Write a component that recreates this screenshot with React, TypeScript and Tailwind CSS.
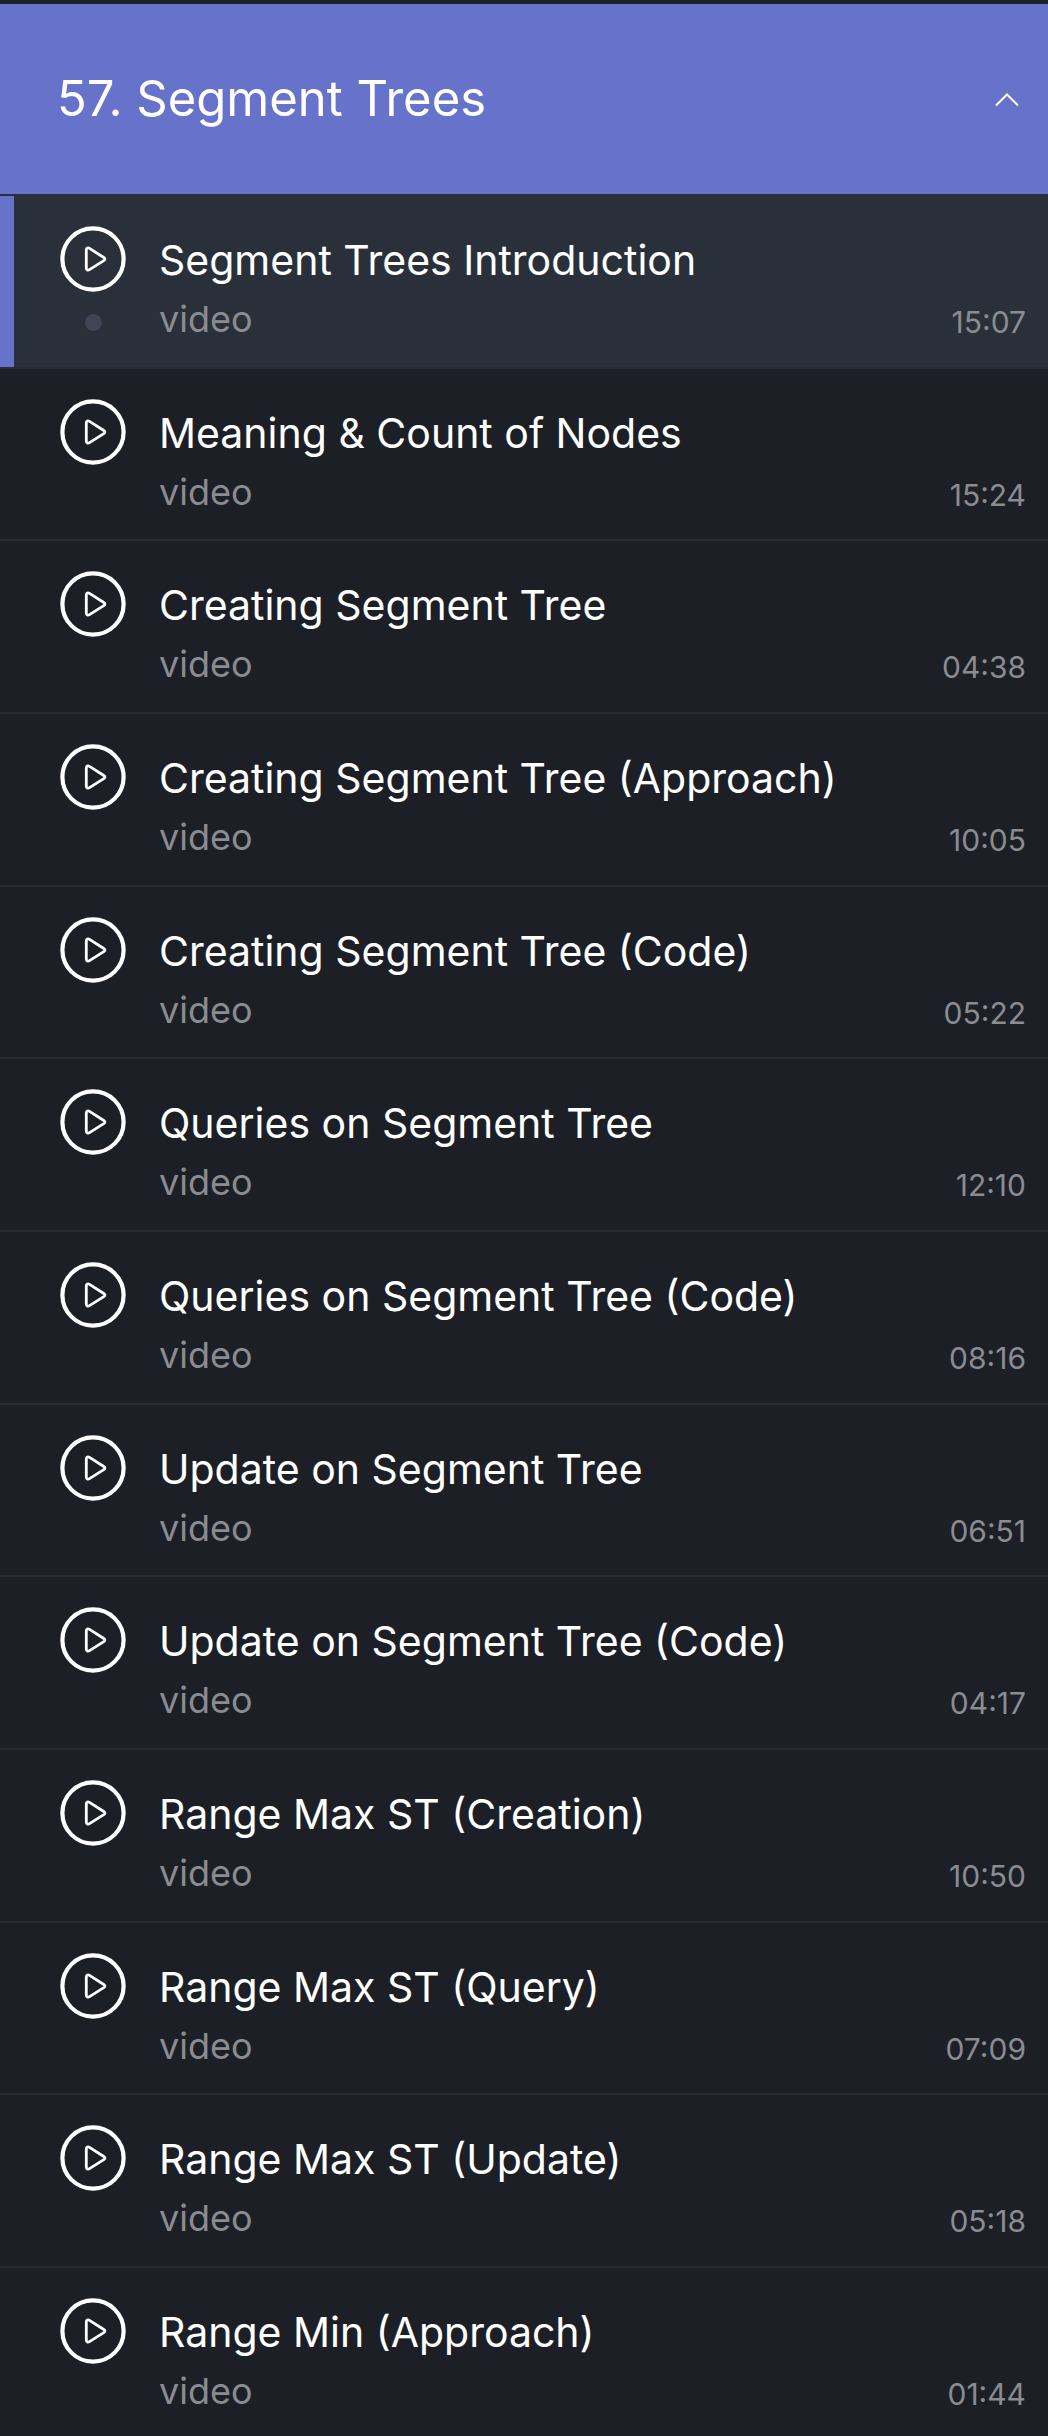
import { useState } from "react";

type Lesson = { title: string; kind: string; duration: string };

const lessons: Lesson[] = [
  { title: "Segment Trees Introduction", kind: "video", duration: "15:07" },
  { title: "Meaning & Count of Nodes", kind: "video", duration: "15:24" },
  { title: "Creating Segment Tree", kind: "video", duration: "04:38" },
  { title: "Creating Segment Tree (Approach)", kind: "video", duration: "10:05" },
  { title: "Creating Segment Tree (Code)", kind: "video", duration: "05:22" },
  { title: "Queries on Segment Tree", kind: "video", duration: "12:10" },
  { title: "Queries on Segment Tree (Code)", kind: "video", duration: "08:16" },
  { title: "Update on Segment Tree", kind: "video", duration: "06:51" },
  { title: "Update on Segment Tree (Code)", kind: "video", duration: "04:17" },
  { title: "Range Max ST (Creation)", kind: "video", duration: "10:50" },
  { title: "Range Max ST (Query)", kind: "video", duration: "07:09" },
  { title: "Range Max ST (Update)", kind: "video", duration: "05:18" },
  { title: "Range Min (Approach)", kind: "video", duration: "01:44" },
];

function PlayIcon() {
  return (
    <svg viewBox="0 0 66 66" className="block size-[66px]" fill="none" stroke="currentColor" aria-hidden="true">
      <circle cx="33" cy="33" r="30.6" strokeWidth="4.2" />
      <path
        d="M26.3 24V42c0 2 1.6 2.6 3.2 1.6l14.3-9c1.5-1 1.5-2.2 0-3.1l-14.3-9.1c-1.6-1-3.2-.4-3.2 1.6Z"
        strokeWidth="2.8"
        strokeLinejoin="round"
      />
    </svg>
  );
}

function LessonRow({ lesson, active, onSelect }: { lesson: Lesson; active: boolean; onSelect: () => void }) {
  return (
    <li
      className={`border-t-2 ${active ? "border-[#2a2f3b] bg-[#2a303a]" : "border-[#2a2b2e]"} [&:nth-child(3n+2)_button]:pb-[18px] last:[&_button]:pb-4`}
    >
      <button
        type="button"
        onClick={onSelect}
        aria-current={active ? "true" : undefined}
        className={`flex w-full items-stretch border-l-14 pt-[30px] pr-[22px] pb-[19px] pl-[46px] text-left ${active ? "border-[#6773cb]" : "border-transparent"}`}
      >
        <span className="flex w-[66px] shrink-0 flex-col items-center gap-[22px] text-white">
          <PlayIcon />
          {active && <span className="size-[17px] rounded-full bg-[#3e4655]" />}
        </span>
        <span className="ml-[33px] flex min-w-0 flex-1 flex-col pt-1">
          <span className="text-[41px] leading-[60px] text-white">{lesson.title}</span>
          <span className="flex items-end justify-between text-[#8a8c90]">
            <span className="text-[36px] leading-[58px]">{lesson.kind}</span>
            <span className="text-[30px] leading-[52px]">{lesson.duration}</span>
          </span>
        </span>
      </button>
    </li>
  );
}

export default function App() {
  const [open, setOpen] = useState(true);
  const [current, setCurrent] = useState(0);

  return (
    <main className="w-full border-t-4 border-[#1b1f2b] bg-[#1d1f27] font-['Inter',sans-serif]">
      <h2>
        <button
          type="button"
          aria-expanded={open}
          onClick={() => setOpen(!open)}
          className="flex w-full items-center justify-between bg-[#6773cb] py-[63px] pl-[57px] pr-7 text-left text-[49px] leading-[64px] text-white"
        >
          <span>57. Segment Trees</span>
          <svg viewBox="0 0 26 16" className="h-4 w-[26px]" fill="none" stroke="currentColor" strokeWidth="2" aria-hidden="true">
            <path d={open ? "M2 14.5 13 3.5 24 14.5" : "M2 3.5 13 14.5 24 3.5"} />
          </svg>
        </button>
      </h2>
      {open && (
        <ul>
          {lessons.map((lesson, i) => (
            <LessonRow key={lesson.title} lesson={lesson} active={i === current} onSelect={() => setCurrent(i)} />
          ))}
        </ul>
      )}
    </main>
  );
}
